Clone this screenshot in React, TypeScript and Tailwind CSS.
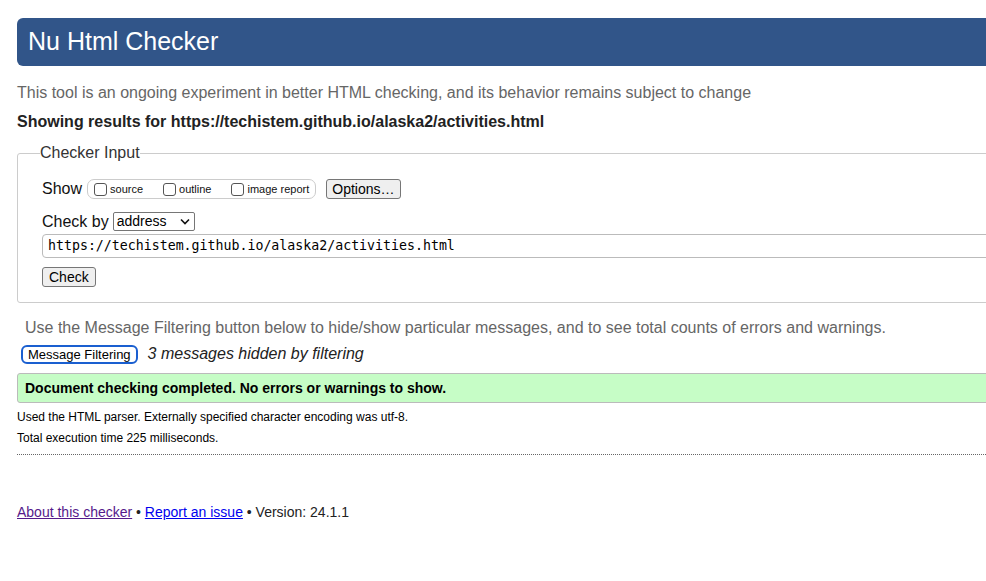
import React from "react";

function Box({ label }: { label: string }) {
  return (
    <span className="flex items-center">
      <span className="w-[13px] h-[13px] border border-[#555] rounded-[3px] bg-white inline-block" />
      <span className="ml-[3px] text-[11px] text-[#111] leading-[13px]">{label}</span>
    </span>
  );
}

export default function App() {
  return (
    <div className="w-[986px] h-[581px] overflow-hidden bg-white font-['Liberation_Sans',Arial,sans-serif] text-[#222]">
      <div className="w-[1120px] pl-[17px] pt-[18px]">
        <h1 className="h-[48px] bg-[#315589] rounded-l-[6px] text-white text-[25px] pl-[11px] leading-[46px] font-normal">
          Nu Html Checker
        </h1>
        <p className="mt-[17px] text-[16px] leading-[20px] text-[#666]">
          This tool is an ongoing experiment in better HTML checking, and its behavior remains subject to change
        </p>
        <p className="mt-[9px] text-[16px] leading-[20px] font-bold text-[#222]">
          Showing results for https://techistem.github.io/alaska2/activities.html
        </p>
        <fieldset className="mt-[11px] border border-[#ccc] rounded-[3px] pl-[24px] pb-[15px]">
          <legend className="ml-[-2px] text-[16px] leading-[20px] text-[#333]">Checker Input</legend>
          <div className="flex flex-col items-start">
            <div className="mt-[15px] h-[22px] flex items-center">
              <span className="text-[16px] text-[#111]">Show</span>
              <span className="ml-[5px] h-[20px] border border-[#ccc] rounded-[7px] flex items-center pl-[6px] pr-[6px] gap-[20px]">
                <Box label="source" />
                <Box label="outline" />
                <Box label="image report" />
              </span>
              <span className="ml-[10px] h-[20px] border border-[#767676] bg-[#efefef] rounded-[3px] px-[5px] text-[14px] leading-[18px] text-black">
                Options…
              </span>
            </div>
            <div className="mt-[12px] h-[19px] flex items-center">
              <span className="text-[16px] text-[#111]">Check by</span>
              <span className="ml-[4px] w-[82px] h-[19px] border border-[#767676] rounded-[2px] flex items-center pl-[3px] pr-[4px] justify-between text-[14px] text-black bg-white">
                <span className="leading-[17px]">address</span>
                <svg width="10" height="7" viewBox="0 0 10 7">
                  <path d="M1 1.5 L5 5.5 L9 1.5" fill="none" stroke="#111" strokeWidth="1.6" />
                </svg>
              </span>
            </div>
            <div className="mt-[3px] h-[24px] w-[1060px] border border-[#bbb] rounded-[4px] flex items-center pl-[5px] font-['DejaVu_Sans_Mono',monospace] text-[13.25px] text-black">
              https://techistem.github.io/alaska2/activities.html
            </div>
            <span className="mt-[9px] h-[20px] border border-[#767676] bg-[#efefef] rounded-[3px] px-[6px] text-[14px] leading-[18px] text-black">
              Check
            </span>
          </div>
        </fieldset>
        <p className="mt-[15px] pl-[8px] text-[16px] leading-[20px] text-[#666]">
          Use the Message Filtering button below to hide/show particular messages, and to see total counts of errors and warnings.
        </p>
        <div className="mt-[6px] flex items-center h-[20px]">
          <span className="ml-[4px] h-[19px] border-2 border-[#1a5fd0] rounded-[6px] px-[5px] text-[13px] leading-[15px] text-black">
            Message Filtering
          </span>
          <span className="ml-[10px] italic text-[16px] text-[#222]">3 messages hidden by filtering</span>
        </div>
        <div className="mt-[9px] h-[30px] border border-[#bbb] bg-[#c6fdc6] rounded-l-[3px] flex items-center pl-[7px] text-[14px] font-bold text-black">
          Document checking completed. No errors or warnings to show.
        </div>
        <p className="mt-[7px] text-[12px] leading-[15px] text-black">
          Used the HTML parser. Externally specified character encoding was utf-8.
        </p>
        <p className="mt-[6px] text-[12px] leading-[15px] text-black">Total execution time 225 milliseconds.</p>
        <div className="mt-[8px] border-t border-dotted border-[#666]" />
        <p className="mt-[48px] text-[14px] leading-[18px] text-[#222]">
          <a className="text-[#551a8b] underline">About this checker</a>
          {" • "}
          <a className="text-[#0000ee] underline">Report an issue</a>
          {" • Version: 24.1.1"}
        </p>
      </div>
    </div>
  );
}
